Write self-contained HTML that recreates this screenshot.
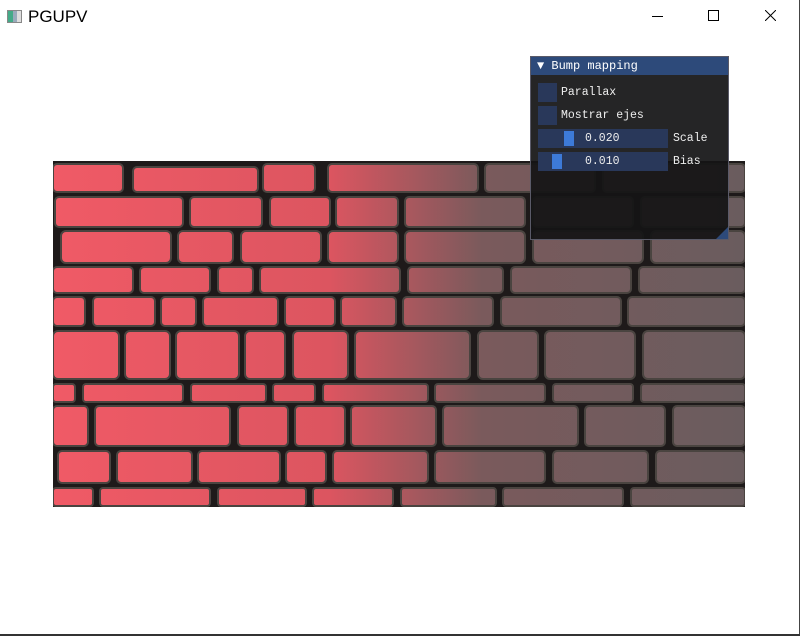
<!DOCTYPE html>
<html><head><style>
body{margin:0;width:800px;height:636px;background:#fff;position:relative;overflow:hidden;font-family:"Liberation Sans",sans-serif}
.t{position:absolute;left:28px;top:7px;font-size:17px;color:#000}
.panel{position:absolute;left:530px;top:56px;width:199px;height:184px;background:rgba(20,20,22,0.93);border:1px solid #5a5a68;box-sizing:border-box}
.hdr{height:18px;background:#2d4a7a;color:#fff;font-family:"Liberation Mono",monospace;font-size:12px;line-height:18px;padding-left:6px}
.m{position:absolute;font-family:"Liberation Mono",monospace;font-size:11.5px;color:#eee}
.cb{position:absolute;width:19px;height:19px;background:#29385a}
.sl{position:absolute;width:130px;height:19px;background:#29385a;left:7px}
.gr{position:absolute;top:2px;width:10px;height:15px;background:#3d7ad8}
</style></head><body>
<div style="position:absolute;left:7px;top:10px;width:13px;height:11px;border:1px solid #888;background:linear-gradient(90deg,#4a8 0 40%,#9ab 40% 70%,#ddd 70%)"></div>
<div class="t">PGUPV</div>
<div style="position:absolute;left:652px;top:16px;width:11px;height:1px;background:#000"></div>
<div style="position:absolute;left:708px;top:10px;width:9px;height:9px;border:1px solid #000"></div>
<svg style="position:absolute;left:765px;top:10px" width="11" height="11"><path d="M0 0L11 11M11 0L0 11" stroke="#000" stroke-width="1"/></svg>
<svg style="position:absolute;left:53px;top:161px" width="692" height="346">
<defs><linearGradient id="g" gradientUnits="userSpaceOnUse" x1="0" y1="0" x2="692" y2="0"><stop offset="0" stop-color="#f05a66"/><stop offset="0.4" stop-color="#dc5560"/><stop offset="0.62" stop-color="#7a5a5c"/><stop offset="1" stop-color="#6a5c5e"/></linearGradient></defs>
<rect width="692" height="346" fill="#1e1a1a"/>
<g fill="url(#g)" stroke="#4a4440" stroke-width="2">
<rect x="0" y="3" width="70" height="28" rx="4"/><rect x="80" y="6" width="125" height="25" rx="4"/><rect x="210" y="3" width="52" height="28" rx="4"/><rect x="275" y="3" width="150" height="28" rx="4"/><rect x="432" y="3" width="110" height="28" rx="4"/><rect x="550" y="3" width="142" height="28" rx="4"/>
<rect x="2" y="36" width="128" height="30" rx="4"/><rect x="137" y="36" width="72" height="30" rx="4"/><rect x="217" y="36" width="60" height="30" rx="4"/><rect x="283" y="36" width="62" height="30" rx="4"/><rect x="352" y="36" width="120" height="30" rx="4"/><rect x="480" y="36" width="100" height="30" rx="4"/><rect x="588" y="36" width="104" height="30" rx="4"/>
<rect x="8" y="70" width="110" height="32" rx="5"/><rect x="125" y="70" width="55" height="32" rx="5"/><rect x="188" y="70" width="80" height="32" rx="5"/><rect x="275" y="70" width="70" height="32" rx="5"/><rect x="352" y="70" width="120" height="32" rx="5"/><rect x="480" y="70" width="110" height="32" rx="5"/><rect x="598" y="70" width="94" height="32" rx="5"/>
<rect x="0" y="106" width="80" height="26" rx="4"/><rect x="87" y="106" width="70" height="26" rx="4"/><rect x="165" y="106" width="35" height="26" rx="4"/><rect x="207" y="106" width="140" height="26" rx="4"/><rect x="355" y="106" width="95" height="26" rx="4"/><rect x="458" y="106" width="120" height="26" rx="4"/><rect x="586" y="106" width="106" height="26" rx="4"/>
<rect x="0" y="136" width="32" height="29" rx="4"/><rect x="40" y="136" width="62" height="29" rx="4"/><rect x="108" y="136" width="35" height="29" rx="4"/><rect x="150" y="136" width="75" height="29" rx="4"/><rect x="232" y="136" width="50" height="29" rx="4"/><rect x="288" y="136" width="55" height="29" rx="4"/><rect x="350" y="136" width="90" height="29" rx="4"/><rect x="448" y="136" width="120" height="29" rx="4"/><rect x="575" y="136" width="117" height="29" rx="4"/>
<rect x="0" y="170" width="66" height="48" rx="5"/><rect x="72" y="170" width="45" height="48" rx="5"/><rect x="123" y="170" width="63" height="48" rx="5"/><rect x="192" y="170" width="40" height="48" rx="5"/><rect x="240" y="170" width="55" height="48" rx="5"/><rect x="302" y="170" width="115" height="48" rx="5"/><rect x="425" y="170" width="60" height="48" rx="5"/><rect x="492" y="170" width="90" height="48" rx="5"/><rect x="590" y="170" width="102" height="48" rx="5"/>
<rect x="0" y="223" width="22" height="18" rx="3"/><rect x="30" y="223" width="100" height="18" rx="3"/><rect x="138" y="223" width="75" height="18" rx="3"/><rect x="220" y="223" width="42" height="18" rx="3"/><rect x="270" y="223" width="105" height="18" rx="3"/><rect x="382" y="223" width="110" height="18" rx="3"/><rect x="500" y="223" width="80" height="18" rx="3"/><rect x="588" y="223" width="104" height="18" rx="3"/>
<rect x="0" y="245" width="35" height="40" rx="4"/><rect x="42" y="245" width="135" height="40" rx="4"/><rect x="185" y="245" width="50" height="40" rx="4"/><rect x="242" y="245" width="50" height="40" rx="4"/><rect x="298" y="245" width="85" height="40" rx="4"/><rect x="390" y="245" width="135" height="40" rx="4"/><rect x="532" y="245" width="80" height="40" rx="4"/><rect x="620" y="245" width="72" height="40" rx="4"/>
<rect x="5" y="290" width="52" height="32" rx="4"/><rect x="64" y="290" width="75" height="32" rx="4"/><rect x="145" y="290" width="82" height="32" rx="4"/><rect x="233" y="290" width="40" height="32" rx="4"/><rect x="280" y="290" width="95" height="32" rx="4"/><rect x="382" y="290" width="110" height="32" rx="4"/><rect x="500" y="290" width="95" height="32" rx="4"/><rect x="603" y="290" width="89" height="32" rx="4"/>
<rect x="0" y="327" width="40" height="18" rx="3"/><rect x="47" y="327" width="110" height="18" rx="3"/><rect x="165" y="327" width="88" height="18" rx="3"/><rect x="260" y="327" width="80" height="18" rx="3"/><rect x="348" y="327" width="95" height="18" rx="3"/><rect x="450" y="327" width="120" height="18" rx="3"/><rect x="578" y="327" width="114" height="18" rx="3"/>
</g></svg>
<div class="panel">
<div class="hdr">▼ Bump mapping</div>
<div class="cb" style="left:7px;top:26px"></div><div class="m" style="left:30px;top:29px">Parallax</div>
<div class="cb" style="left:7px;top:49px"></div><div class="m" style="left:30px;top:52px">Mostrar ejes</div>
<div class="sl" style="top:72px"><div class="gr" style="left:26px"></div><div class="m" style="left:47px;top:3px">0.020</div></div>
<div class="m" style="left:142px;top:75px">Scale</div>
<div class="sl" style="top:95px"><div class="gr" style="left:14px"></div><div class="m" style="left:47px;top:3px">0.010</div></div>
<div class="m" style="left:142px;top:98px">Bias</div>
<div style="position:absolute;right:0;bottom:0;width:0;height:0;border-left:12px solid transparent;border-bottom:12px solid #2d4a7a"></div>
</div>
<div style="position:absolute;right:0;top:0;width:1px;height:636px;background:#444"></div>
<div style="position:absolute;left:0;bottom:0;width:800px;height:2px;background:#333"></div>
</body></html>
